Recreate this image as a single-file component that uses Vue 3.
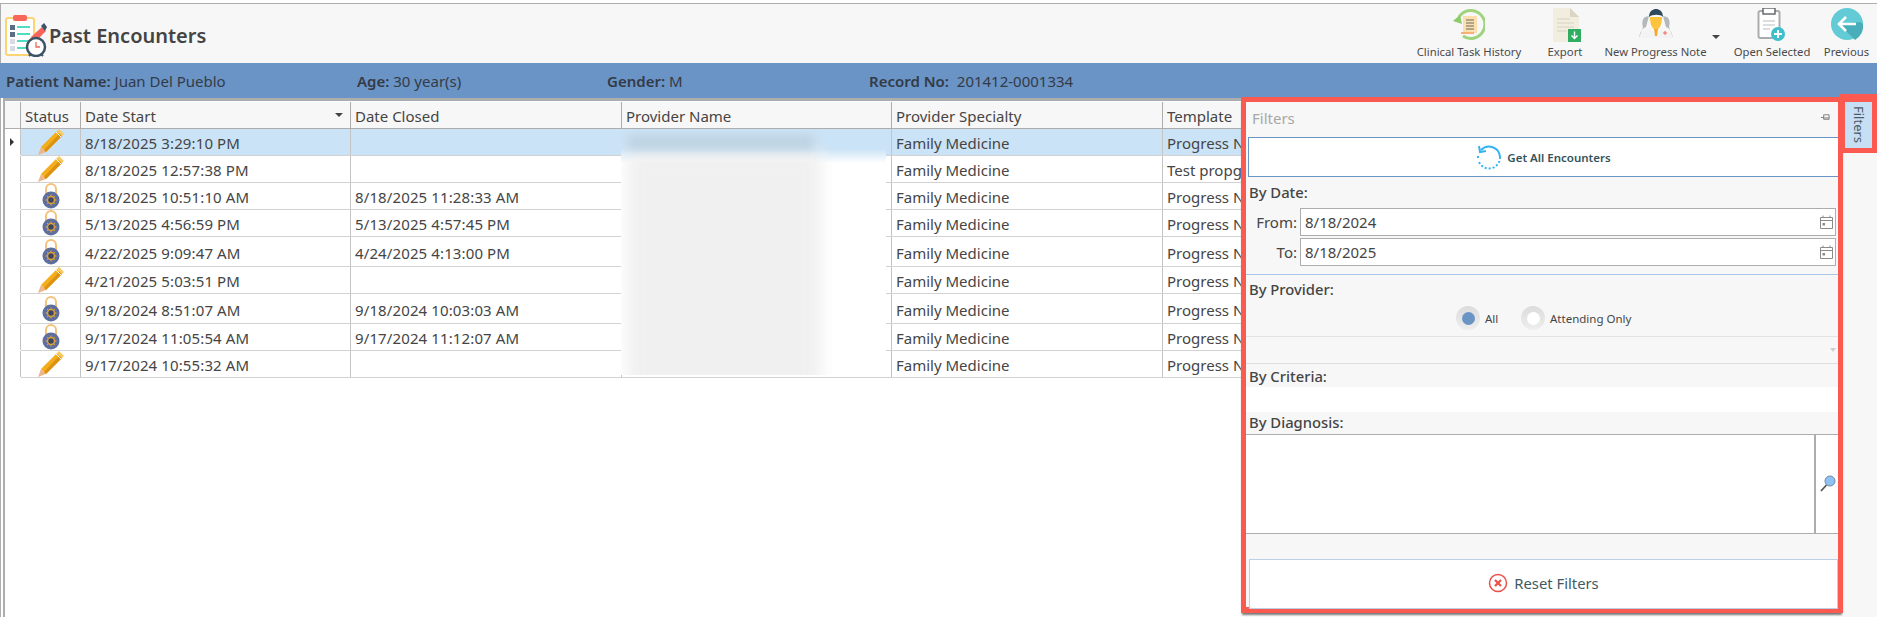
<script setup>
const rows = [
  { icon: 'pencil', start: '8/18/2025 3:29:10 PM', closed: '', tpl: 'Progress N', selected: true },
  { icon: 'pencil', start: '8/18/2025 12:57:38 PM', closed: '', tpl: 'Test propg' },
  { icon: 'lock', start: '8/18/2025 10:51:10 AM', closed: '8/18/2025 11:28:33 AM', tpl: 'Progress N' },
  { icon: 'lock', start: '5/13/2025 4:56:59 PM', closed: '5/13/2025 4:57:45 PM', tpl: 'Progress N' },
  { icon: 'lock', start: '4/22/2025 9:09:47 AM', closed: '4/24/2025 4:13:00 PM', tpl: 'Progress N', tall: true },
  { icon: 'pencil', start: '4/21/2025 5:03:51 PM', closed: '', tpl: 'Progress N' },
  { icon: 'lock', start: '9/18/2024 8:51:07 AM', closed: '9/18/2024 10:03:03 AM', tpl: 'Progress N', tall: true },
  { icon: 'lock', start: '9/17/2024 11:05:54 AM', closed: '9/17/2024 11:12:07 AM', tpl: 'Progress N' },
  { icon: 'pencil', start: '9/17/2024 10:55:32 AM', closed: '', tpl: 'Progress N' },
]
</script>

<template>
  <div class="page">
    <header class="toolbar">
      <div class="title">
        <svg class="logo" width="42" height="42" viewBox="0 0 42 42">
          <rect x="1" y="3" width="28" height="37" rx="2" fill="#fff" stroke="#fcd471" stroke-width="2"/>
          <rect x="8" y="0" width="14" height="6" rx="2" fill="#f8655a"/>
          <rect x="5" y="10" width="5" height="5" fill="#5a6e85"/>
          <rect x="5" y="17" width="5" height="5" fill="#5a6e85"/>
          <rect x="5" y="24" width="5" height="5" fill="#d6dbe6"/>
          <rect x="5" y="31" width="5" height="5" fill="#d6dbe6"/>
          <path d="M12 12h13M12 19h13M12 26h13M12 33h13" stroke="#4fdcc0" stroke-width="2"/>
          <path d="M23 29l3-7 11-10 4 4-11 11z" fill="#f8655a"/>
          <path d="M23 29l3-7 4 4z" fill="#fcd471"/>
          <path d="M36 11l3-3 3 4-2 4z" fill="#3c5367"/>
          <circle cx="31" cy="32" r="9" fill="#fff" stroke="#3c5367" stroke-width="2.5"/>
          <path d="M31 27v5h4" stroke="#f8655a" stroke-width="1.3" fill="none"/>
          <path d="M24 41l2-2M38 41l-2-2" stroke="#3c5367" stroke-width="2"/>
        </svg>
        <h1>Past Encounters</h1>
      </div>
      <nav class="actions">
        <div class="action w-task">
          <svg width="32" height="32" viewBox="0 0 32 32">
            <path d="M6 9A14 14 0 1 1 10 28" fill="none" stroke="#9ed47c" stroke-width="3"/>
            <path d="M0 13l7-6 2 9z" fill="#8ccb68"/>
            <rect x="10" y="8" width="14" height="17" fill="#fbdfae"/>
            <path d="M13 12h8M13 15h8M13 18h8M13 21h8" stroke="#6b6b60" stroke-width="1.2"/>
            <rect x="8" y="24" width="13" height="2" fill="#f7b072"/>
          </svg>
          <span>Clinical Task History</span>
        </div>
        <div class="action w-export">
          <svg width="32" height="34" viewBox="0 0 32 34">
            <path d="M4 0h17l9 9v25H4z" fill="#f1eee0"/>
            <path d="M21 0l9 9h-9z" fill="#d9d5c2"/>
            <path d="M8 11h13M8 15h17M8 19h17M8 23h10" stroke="#e0dcc9" stroke-width="1.4"/>
            <rect x="19" y="21" width="13" height="13" fill="#2fae62"/>
            <path d="M25.500 23.500v7M22.500 27.500l3 3 3-3" stroke="#fff" stroke-width="1.4" fill="none"/>
          </svg>
          <span>Export</span>
        </div>
        <div class="action w-note">
          <svg width="34" height="30" viewBox="0 0 34 30">
            <path d="M0 30c1-7 4-10 7-11l3-11-4 1c-3 2-3 7-2 10zM34 30c-1-7-4-10-7-11l-3-11 4 1c3 2 3 7 2 10z" fill="#b4b8bb"/>
            <path d="M1 30c1-6 5-8 10-9l6 5 6-5c5 1 9 3 10 9z" fill="#f3f3f3"/>
            <path d="M11 9c0 8 3 13 6 13s6-5 6-13z" fill="#fcc33d"/>
            <path d="M15 21h4l-1 7h-2z" fill="#f7a92b"/>
            <path d="M10 9c0-6 4-8 7-8s7 2 7 8c-2-3-11-3-14 0z" fill="#2f4a5c"/>
            <path d="M24 25h4M26 23v4" stroke="#f8655a" stroke-width="1"/>
          </svg>
          <span>New Progress Note</span>
        </div>
        <div class="caret-cell"><i class="caret"></i></div>
        <div class="action w-open">
          <svg width="30" height="34" viewBox="0 0 30 34">
            <rect x="1.500" y="3" width="21" height="27" rx="2" fill="#fff" stroke="#a9adb0" stroke-width="2"/>
            <rect x="6" y="0" width="12" height="6" fill="#fff" stroke="#5d6266" stroke-width="1.4"/>
            <path d="M6 13h12M6 17h12M6 21h7" stroke="#cfd2d4" stroke-width="1.3"/>
            <circle cx="21" cy="26" r="7" fill="#3dbfcc"/>
            <path d="M21 22v8M17 26h8" stroke="#fff" stroke-width="2"/>
          </svg>
          <span>Open Selected</span>
        </div>
        <div class="action w-prev">
          <svg width="32" height="32" viewBox="0 0 32 32">
            <circle cx="16" cy="16" r="16" fill="#62cbd5"/>
            <path d="M8 16l8 8 8 8a16 16 0 0 0 8-16l-3-2z" fill="#4aadba"/>
            <path d="M25 16H9M15 9l-7 7 7 7" fill="none" stroke="#fff" stroke-width="2.6"/>
          </svg>
          <span>Previous</span>
        </div>
      </nav>
    </header>

    <section class="patient">
      <div class="p-name"><b>Patient Name:</b> Juan Del Pueblo</div>
      <div class="p-age"><b>Age:</b> 30 year(s)</div>
      <div class="p-gender"><b>Gender:</b> M</div>
      <div><b>Record No:</b>&nbsp; 201412-0001334</div>
    </section>

    <main class="body">
      <div class="grid-wrap">
        <div class="grid">
          <div class="row head">
            <div class="cell c-hdr"></div>
            <div class="cell c-status">Status</div>
            <div class="cell c-date">Date Start<i class="caret sort"></i></div>
            <div class="cell c-date wide">Date Closed</div>
            <div class="cell c-date">Provider Name</div>
            <div class="cell c-date wide">Provider Specialty</div>
            <div class="cell c-tpl">Template</div>
          </div>
          <div v-for="(r, i) in rows" :key="i" class="row" :class="{ selected: r.selected, tall: r.tall }">
            <div class="cell c-hdr blank"><i v-if="r.selected" class="marker"></i></div>
            <div class="cell c-status icon">
              <svg v-if="r.icon === 'pencil'" width="26" height="26" viewBox="0 0 26 26">
                <path d="M0 26l3-8 5 5z" fill="#eeb68c"/>
                <path d="M3 18L19 2l5 5L8 23z" fill="#f4ae1b"/>
                <path d="M6 21L21.500 4.500l2.500 2.500L8 23z" fill="#dc9210"/>
                <path d="M19 2l2-2 5 5-2 2z" fill="#f7c95e"/>
                <path d="M18 3l5 5" stroke="#fff" stroke-width="1"/>
              </svg>
              <svg v-else width="18" height="26" viewBox="0 0 18 26">
                <path d="M4 12V6a5 5 0 0 1 10 0v6" fill="none" stroke="#f3c27d" stroke-width="2"/>
                <circle cx="9" cy="17" r="8.500" fill="#5e6f9f"/>
                <circle cx="9" cy="17" r="3.500" fill="#3d4660" stroke="#d9a23f" stroke-width="1.500"/>
                <path d="M9 11.500v2M9 20.500v2M3.500 17h2M12.500 17h2M5 13l1.500 1.500M13 13l-1.500 1.500M5 21l1.500-1.500M13 21l-1.500-1.500" stroke="#d9a23f" stroke-width="1"/>
              </svg>
            </div>
            <div class="cell c-date stamp">{{ r.start }}</div>
            <div class="cell c-date wide stamp">{{ r.closed }}</div>
            <div class="cell c-date"></div>
            <div class="cell c-date wide">Family Medicine</div>
            <div class="cell c-tpl">{{ r.tpl }}</div>
          </div>
        </div>

        <div class="blur-mask" aria-hidden="true">
          <div class="blur-rest"></div>
          <div class="blur-top"></div>
        </div>
      </div>

      <aside class="strip">
        <div class="tab-frame"><div class="tab"><span>Filters</span></div></div>
      </aside>

      <section class="panel">
        <div class="panel-title">
          <span>Filters</span>
          <svg width="9" height="9" viewBox="0 0 10 10"><path d="M0 5h3M3 2h6v5H3zM3 5.500h6" stroke="#777" fill="none"/></svg>
        </div>
        <button class="btn get">
          <svg width="26" height="26" viewBox="0 0 26 26">
            <path d="M5 6A11 11 0 0 1 24 13" fill="none" stroke="#34b4f3" stroke-width="2"/>
            <path d="M24 13a11 11 0 0 1-21 5" fill="none" stroke="#34b4f3" stroke-width="2" stroke-dasharray="2 2"/>
            <path d="M2 12A11 11 0 0 1 2 14" fill="none" stroke="#34b4f3" stroke-width="2"/>
            <path d="M3 2l1 6 6-1" fill="none" stroke="#34b4f3" stroke-width="2"/>
          </svg>
          <b>Get All Encounters</b>
        </button>
        <h3 class="lbl date-lbl">By Date:</h3>
        <div class="date-row">
          <label>From:</label>
          <div class="date-box"><span>8/18/2024</span>
            <svg width="13" height="14" viewBox="0 0 13 14"><path d="M.5 2.500h12v11H.5zM.5 5.500h12M3 .5v2M10 .5v2" fill="none" stroke="#8a8a8a"/><rect x="2.500" y="8" width="2.500" height="2.500" fill="#8a8a8a"/></svg>
          </div>
        </div>
        <div class="date-row second">
          <label>To:</label>
          <div class="date-box"><span>8/18/2025</span>
            <svg width="13" height="14" viewBox="0 0 13 14"><path d="M.5 2.500h12v11H.5zM.5 5.500h12M3 .5v2M10 .5v2" fill="none" stroke="#8a8a8a"/><rect x="2.500" y="8" width="2.500" height="2.500" fill="#8a8a8a"/></svg>
          </div>
        </div>
        <h3 class="lbl provider-lbl">By Provider:</h3>
        <div class="radios">
          <div class="radio on"><i></i></div><span class="r-all">All</span>
          <div class="radio"><i></i></div><span>Attending Only</span>
        </div>
        <div class="combo"><i class="combo-arrow"></i></div>
        <h3 class="lbl criteria-lbl">By Criteria:</h3>
        <div class="criteria"></div>
        <h3 class="lbl diag-lbl">By Diagnosis:</h3>
        <div class="diag">
          <div class="diag-input"></div>
          <div class="diag-btn">
            <svg width="16" height="18" viewBox="0 0 16 18">
              <circle cx="10" cy="6" r="5" fill="#8fc1f2" stroke="#6f8aa8"/>
              <path d="M6.500 10L1 16" stroke="#555" stroke-width="1.800"/>
            </svg>
          </div>
        </div>
        <button class="btn reset">
          <svg width="20" height="20" viewBox="0 0 20 20">
            <circle cx="10" cy="10" r="8.500" fill="#fff" stroke="#e8524a" stroke-width="1.500"/>
            <path d="M7 7l6 6M13 7l-6 6" stroke="#e8524a" stroke-width="2.200"/>
          </svg>
          <span>Reset Filters</span>
        </button>
      </section>
    </main>
  </div>
</template>

<style scoped>
.page {
  position: relative;
  width: 1877px;
  height: 617px;
  overflow: hidden;
  background: #fff;
  font-family: "Noto Sans", "Open Sans", sans-serif;
  font-size: 15px;
  color: #454545;
  padding-top: 3px;
  box-sizing: border-box;
  display: flex;
  flex-direction: column;
}
.toolbar {
  height: 60px;
  flex: none;
  box-sizing: border-box;
  border-top: 1px solid #adadad;
  border-left: 1px solid #adadad;
  background: #f7f7f7;
  display: flex;
  justify-content: space-between;
}
.title {
  display: flex;
  align-items: center;
  padding-left: 4px;
  gap: 2px;
}
.logo { margin-top: 5px; }
h1 {
  margin: 3px 0 0;
  font-size: 20px;
  font-weight: 600;
  color: #444;
}
.actions { display: flex; }
.action {
  display: flex;
  flex-direction: column;
  align-items: center;
  justify-content: space-between;
  box-sizing: border-box;
  padding: 4px 0 4px;
  font-size: 11.300px;
  color: #4a4a4a;
  white-space: nowrap;
}
.w-task { width: 124px; }
.w-export { width: 68px; }
.w-note { width: 113px; }
.caret-cell { width: 16px; padding-top: 31px; box-sizing: border-box; }
.w-open { width: 88px; }
.w-prev { width: 61px; }
.caret {
  display: block;
  width: 0;
  height: 0;
  border-left: 4px solid transparent;
  border-right: 4px solid transparent;
  border-top: 4px solid #444;
}
.patient {
  height: 35px;
  flex: none;
  background: #6a93c6;
  display: flex;
  align-items: center;
  padding-left: 6px;
  color: #333b47;
  font-size: 15px;
}
.patient b { font-weight: 600; }
.p-name { width: 351px; }
.p-age { width: 250px; }
.p-gender { width: 262px; }
.body {
  flex: 1;
  display: flex;
  min-height: 0;
}
.grid-wrap {
  position: relative;
  flex: 1;
  border-left: 1px solid #adadad;
  overflow: hidden;
}
.grid {
  margin-left: 2px;
  height: 100%;
  border-top: 3px solid #adadad;
  border-left: 2px solid #adadad;
  box-sizing: border-box;
  padding-top: 1px;
}
.row {
  display: flex;
  height: 27px;
  box-sizing: border-box;
  border-bottom: 1px solid #d2d2d2;
  margin-left: 16px;
}
.row.tall { height: 30px; }
.row.head {
  height: 27px;
  background: #f7f7f7;
  border-bottom: 1px solid #adadad;
  margin-left: 0;
}
.row.selected { background: #cbe3f6; }
.cell {
  position: relative;
  box-sizing: border-box;
  border-right: 1px solid #c4c4c4;
  padding: 2px 0 0 4px;
  display: flex;
  align-items: center;
  white-space: nowrap;
  flex: none;
}
.head .cell { border-right-color: #adadad; }
.c-hdr { width: 16px; padding: 0; }
.c-hdr.blank {
  margin-left: -16px;
  background: #fff;
  border-right: 1px solid #c4c4c4;
}
.c-status { width: 60px; }
.c-status.icon { justify-content: center; padding: 0; }
.c-date { width: 270px; }
.c-date.wide { width: 271px; }
.stamp { letter-spacing: 0.12px; }
.c-tpl { width: 700px; border-right: 0; }
.marker {
  margin-left: 5px;
  width: 0;
  height: 0;
  border-top: 4px solid transparent;
  border-bottom: 4px solid transparent;
  border-left: 4px solid #333;
}
.sort { position: absolute; right: 7px; top: 11px; }
.blur-mask {
  position: absolute;
  left: 620px;
  top: 31px;
  width: 265px;
  height: 246px;
  overflow: hidden;
  background: linear-gradient(#cbe3f6 0, #cbe3f6 20px, #fff 34px);
}
.blur-top {
  position: absolute;
  left: 7px;
  top: 6px;
  width: 186px;
  height: 15px;
  background: #bed3e2;
  filter: blur(5px);
}
.blur-rest {
  position: absolute;
  left: 6px;
  top: 22px;
  width: 194px;
  height: 240px;
  background: #f0f0f0;
  filter: blur(8px);
}
.strip {
  width: 34px;
  flex: none;
  background: #f7f7f7;
  margin-top: 5px;
}
.tab-frame {
  position: absolute;
  left: 1840px;
  top: 94px;
  width: 37px;
  height: 59px;
  box-sizing: border-box;
  border: 5px solid #fa5a50;
  border-top-width: 8px;
  background: #c6dff5;
}
.tab {
  height: 100%;
  display: flex;
  justify-content: center;
  align-items: center;
  background: #c6dff5;
  color: #505a64;
  font-size: 13px;
}
.tab span { writing-mode: vertical-rl; }
.panel {
  position: absolute;
  left: 1241px;
  top: 97px;
  width: 602px;
  height: 516px;
  box-sizing: border-box;
  border: 5px solid #fa5a50;
  border-bottom-width: 6px;
  background: #f7f7f7;
  box-shadow: 0 3px 2px -1px #777;
  display: flex;
  flex-direction: column;
}
.panel-title {
  height: 35px;
  flex: none;
  display: flex;
  align-items: center;
  justify-content: space-between;
  padding: 0 8px 4px 6px;
  box-sizing: border-box;
  color: #a8a8a8;
  font-size: 15px;
}
.btn {
  font: inherit;
  background: #fff;
  display: flex;
  align-items: center;
  justify-content: center;
  padding: 0;
}
.get {
  height: 40px;
  flex: none;
  margin-left: 2px;
  border: 1px solid #6a93c6;
  border-right: 0;
  gap: 5px;
  font-size: 11.500px;
  color: #34535a;
}
.get b { font-weight: 600; }
.lbl {
  margin: 0;
  font-size: 14.800px;
  font-weight: 500;
  color: #454545;
  padding-left: 3px;
  flex: none;
}
.date-lbl { height: 31px; line-height: 30px; }
.date-row {
  height: 28px;
  flex: none;
  display: flex;
  gap: 3px;
}
.date-row.second { margin-top: 2px; }
.date-row label {
  width: 51px;
  text-align: right;
  line-height: 28px;
}
.date-box {
  width: 536px;
  box-sizing: border-box;
  border: 1px solid #adadad;
  background: #fff;
  padding: 0 2px 0 4px;
  display: flex;
  align-items: center;
  justify-content: space-between;
}
.provider-lbl {
  margin-top: 8px;
  border-top: 1px solid #a9c7e6;
  height: 29px;
  line-height: 28px;
}
.radios {
  height: 33px;
  flex: none;
  display: flex;
  align-items: center;
  font-size: 11.500px;
  padding: 0 0 4px 210px;
  border-bottom: 1px solid #e3e3e3;
  box-sizing: border-box;
}
.radio {
  width: 24px;
  height: 24px;
  border-radius: 50%;
  background: linear-gradient(#dcdcdc, #eeeeee);
  display: flex;
  align-items: center;
  justify-content: center;
  margin-right: 5px;
}
.radio i {
  width: 13px;
  height: 13px;
  border-radius: 50%;
  background: #fff;
}
.radio.on i { background: #6a93c6; }
.r-all { width: 36px; }
.combo {
  height: 26px;
  flex: none;
  border-bottom: 1px solid #dedede;
  position: relative;
}
.combo-arrow {
  position: absolute;
  right: 2px;
  top: 11px;
  width: 0;
  height: 0;
  border-left: 3.500px solid transparent;
  border-right: 3.500px solid transparent;
  border-top: 4px solid #cfcfcf;
}
.criteria-lbl { height: 23px; line-height: 25px; }
.criteria { height: 25px; flex: none; background: #fff; }
.diag-lbl { height: 22px; line-height: 20px; }
.diag {
  height: 100px;
  flex: none;
  display: flex;
  border-top: 1px solid #adadad;
  border-bottom: 1px solid #adadad;
  box-sizing: border-box;
  background: #fff;
}
.diag-input { flex: 1; border-right: 2px solid #adadad; }
.diag-btn {
  width: 20px;
  display: flex;
  align-items: center;
  justify-content: center;
  padding-left: 2px;
}
.reset {
  margin: 25px 0 0 3px;
  height: 50px;
  flex: none;
  box-sizing: border-box;
  border: 1px solid #bcd0e8;
  padding-bottom: 2px;
  gap: 6px;
  font-size: 14.800px;
  color: #3f5a60;
}
</style>
